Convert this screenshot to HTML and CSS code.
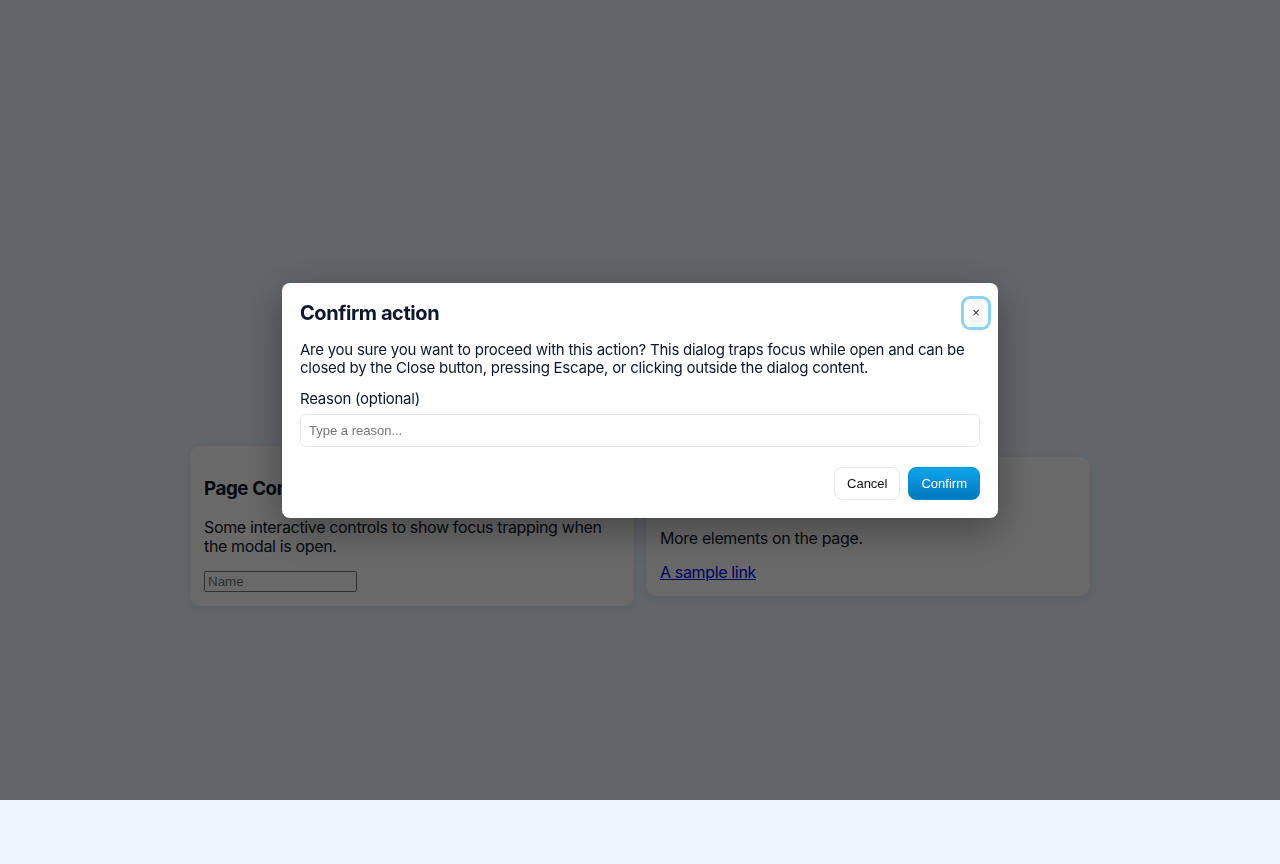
FILE: index.html
```html
<!DOCTYPE html>
<html lang="en">
<head>
    <meta charset="UTF-8">
    <meta name="viewport" content="width=device-width, initial-scale=1.0">
    <title>Focus Trap Modal</title>
    <link rel="stylesheet" href="styles.css">
</head>
<body>
    <main class="page">
        <div class="cards">
            <section class="card">
                <h3>Page Content</h3>
                <p>Some interactive controls to show focus trapping when the modal is open.</p>
                <input class="name-input" type="text" placeholder="Name">
            </section>

            <section class="card">
                <h3>Other section</h3>
                <p>More elements on the page.</p>
                <a href="#">A sample link</a>
            </section>
        </div>
    </main>

    <div class="overlay">
        <div class="modal" role="dialog" aria-modal="true" aria-labelledby="modalTitle">
            <div class="modal-header">
                <h2 id="modalTitle">Confirm action</h2>
                <button class="close-btn" aria-label="Close">&times;</button>
            </div>
            <p class="modal-text">Are you sure you want to proceed with this action? This dialog traps focus while open and can be closed by the Close button, pressing Escape, or clicking outside the dialog content.</p>
            <label class="field-label" for="reason">Reason (optional)</label>
            <input class="reason-input" id="reason" type="text" placeholder="Type a reason...">
            <div class="modal-actions">
                <button class="btn btn-cancel">Cancel</button>
                <button class="btn btn-confirm">Confirm</button>
            </div>
        </div>
    </div>
</body>
</html>
```

FILE: styles.css
```css
:root {
    --page-bg: #eef5ff;
    --text: #0f172a;
    --border: #e5e7eb;
    --ring: #8fd0f4;
}

html {
    background: var(--page-bg);
}

body {
    font-family: Inter, "Noto Sans", sans-serif;
    margin: 0;
    min-height: 864px;
    background: var(--page-bg);
    color: var(--text);
}

.page {
    width: 900px;
    margin: 0 auto;
    padding-top: 446px;
}

.cards {
    display: grid;
    grid-template-columns: 1fr 1fr;
    gap: 12px;
    align-items: center;
}

.card {
    background: #ffffff;
    border-radius: 10px;
    padding: 14px;
    box-shadow: 0 2px 8px rgba(15, 23, 42, 0.08);
    letter-spacing: -0.35px;
}

.card h3 {
    font-size: 18.72px;
    margin: 17px 0 18px;
    line-height: 23px;
    letter-spacing: -0.4px;
}

.card p {
    margin: 0 0 15px;
    font-size: 16px;
    line-height: 19px;
}

.card a {
    display: block;
    color: #0000ee;
    font-size: 16px;
    line-height: 19px;
}

.name-input {
    display: block;
    width: 153px;
    height: 21px;
    box-sizing: border-box;
    border: 1px solid #767676;
    border-radius: 2px;
    padding: 1px 3px;
    font-family: "Liberation Sans", Arial, sans-serif;
    font-size: 13.33px;
    letter-spacing: 0;
}

.overlay {
    position: fixed;
    top: 0;
    left: 0;
    width: 100%;
    height: 800px;
    background: rgba(0, 0, 0, 0.59);
    display: flex;
    align-items: center;
    justify-content: center;
}

.modal {
    width: 716px;
    box-sizing: border-box;
    background: #ffffff;
    border-radius: 8px;
    padding: 16px 18px 18px;
    box-shadow: 0 12px 40px rgba(0, 0, 0, 0.35);
}

.modal-header {
    display: flex;
    align-items: center;
    justify-content: space-between;
}

.modal-header h2 {
    margin: 0;
    font-size: 20px;
    line-height: 24px;
    font-weight: 700;
    letter-spacing: -0.43px;
}

.close-btn {
    width: 24px;
    height: 28px;
    margin-right: -8px;
    padding: 0;
    border: 1px solid #ffffff;
    border-radius: 6px;
    background: #ffffff;
    color: #1e293b;
    font-family: "Liberation Sans", Arial, sans-serif;
    font-size: 13px;
    box-shadow: 0 0 0 3px var(--ring);
    cursor: pointer;
}

.modal-text {
    margin: 14px 0 13px;
    font-size: 15px;
    line-height: 18px;
    letter-spacing: -0.25px;
}

.field-label {
    display: block;
    font-size: 15px;
    line-height: 18px;
    letter-spacing: -0.25px;
    margin-bottom: 6px;
}

.reason-input {
    display: block;
    width: 100%;
    box-sizing: border-box;
    height: 33px;
    padding: 8px;
    border: 1px solid var(--border);
    border-radius: 6px;
    font-family: "Liberation Sans", Arial, sans-serif;
    font-size: 13px;
    color: var(--text);
}

.reason-input::placeholder {
    color: #757575;
}

.modal-actions {
    display: flex;
    justify-content: flex-end;
    gap: 8px;
    margin-top: 20px;
}

.btn {
    height: 33px;
    padding: 0 12px;
    border-radius: 8px;
    font-family: "Liberation Sans", Arial, sans-serif;
    font-size: 13px;
    cursor: pointer;
}

.btn-cancel {
    background: #ffffff;
    color: #111111;
    border: 1px solid var(--border);
}

.btn-confirm {
    background: linear-gradient(180deg, #0ea5e9, #0377bd);
    color: #ffffff;
    border: 1px solid #0a8fd3;
}
```
